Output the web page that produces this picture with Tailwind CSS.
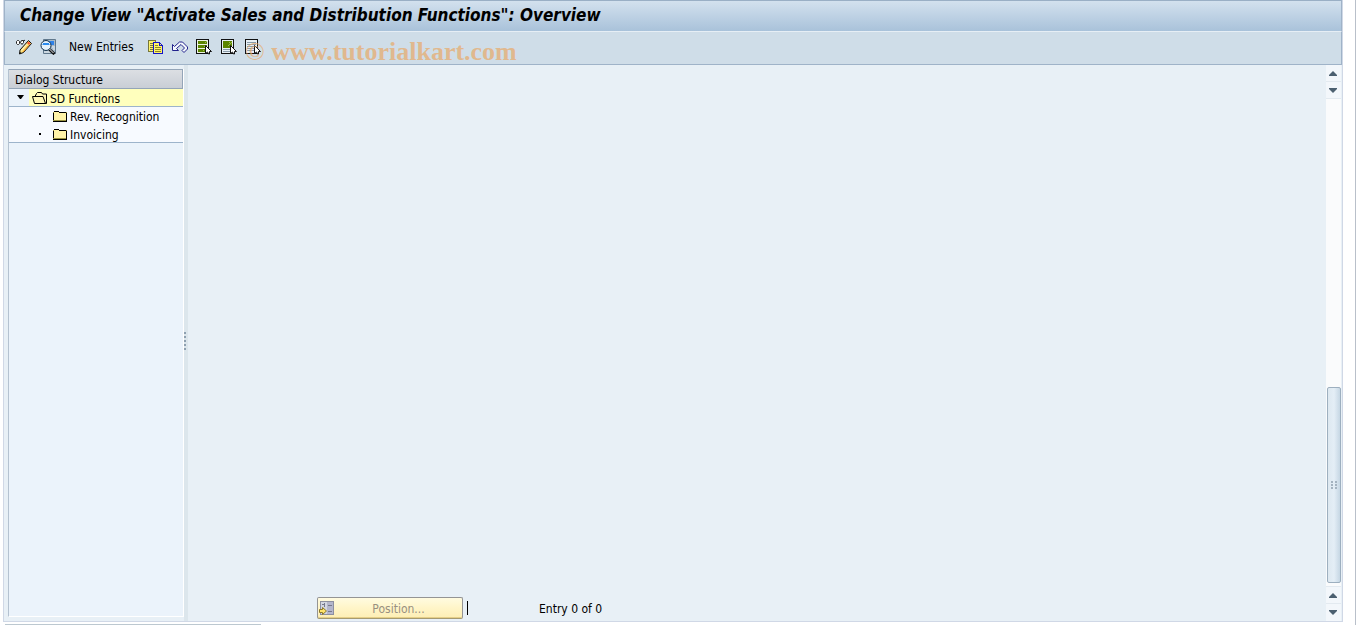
<!DOCTYPE html>
<html lang="en">
<head>
    <meta charset="UTF-8">
    <meta name="viewport" content="width=device-width, initial-scale=1.0">
    <title>Change View "Activate Sales and Distribution Functions": Overview</title>
    <script src="https://cdn.jsdelivr.net/npm/@tailwindcss/browser@4"></script>
</head>
<body class="h-screen flex flex-col overflow-hidden bg-white border-r border-[#b9c0ca] text-xs text-black font-['DejaVu_Sans_Condensed','DejaVu_Sans',sans-serif]">
    <!-- Window -->
    <div class="flex-1 min-h-0 flex flex-col ml-[3px] mr-3 border-x border-b border-[#d0d8e6] bg-[#e8f0f6]">
        <!-- Title bar -->
        <header class="h-8 shrink-0 flex items-center px-[15px] pb-0.5 border-x border-t border-t-[#9aafc5] border-x-[#9fb3c8] border-b border-b-[#e6eef5] bg-linear-to-b from-[#d3e1ee] to-[#a9c2da]">
            <h1 class="text-[17px] leading-5 font-bold italic whitespace-nowrap">Change View "Activate Sales and Distribution Functions": Overview</h1>
        </header>

        <!-- Toolbar -->
        <nav class="relative h-[33px] shrink-0 flex items-center gap-2 px-[11px] pb-0.5 border-x border-b border-[#9fb3c8] bg-[#cfdde8]">
            <button type="button" aria-label="Display / Change">
                <svg class="size-4" viewBox="0 0 16 16" fill="none">
                    <path d="M.5 4.500v-2l1-1h1l1 1v2l-1 1h-1zM4.500 3.500l1-2h2v2l-1.500 2z" fill="#fff" stroke="#222" />
                    <path d="M7 2.500l2-1.500" stroke="#222" />
                    <path d="M12.500 1.500l3 3-8 9-4 1.500.5-4z" fill="#ffe27a" stroke="#111" />
                    <path d="M12.500 2.500l2 2-1.500 1.500-2-2z" fill="#f4502a" />
                    <path d="M10.500 5.500l-5 6" stroke="#fff6d0" />
                    <path d="M12.500 6.500l-5.500 6.500" stroke="#e88b1a" />
                    <path d="M4 13l1.500 1-2 1z" fill="#111" />
                </svg>
            </button>
            <button type="button" aria-label="Choose">
                <svg class="size-4" viewBox="0 0 16 16" fill="none">
                    <path d="M3.500 .500h12v14h-12z" fill="#a8bac8" stroke="#60788c" />
                    <path d="M4 2h10v4H4z" fill="#2f82e8" />
                    <path d="M12 8h3M13 10h2M4 13h6" stroke="#eef4f8" />
                    <circle cx="6" cy="6.500" r="5" fill="#e4f2fc" stroke="#12304a" />
                    <path d="M2.500 5.500h7M3 4.500h6" stroke="#2b8cf0" />
                    <path d="M9.500 10.500l5 4.500" stroke="#111" stroke-width="3" />
                    <path d="M9.500 10l4 4" stroke="#e8eef5" />
                </svg>
            </button>
            <button type="button" class="pl-[5px] pr-1.5 leading-4 whitespace-nowrap">New Entries</button>
            <button type="button" aria-label="Copy As">
                <svg class="size-4" viewBox="0 0 16 16" fill="none" shape-rendering="crispEdges">
                    <path d="M.5 1.500h7v11h-7z" fill="#fff36b" stroke="#77773a" />
                    <path d="M2 4.500h4M2 6.500h3M2 8.500h3M2 10.500h3" stroke="#77773a" />
                    <path d="M5.500 3.500h6l3 3v8h-9z" fill="#fff36b" stroke="#1414c8" />
                    <path d="M11.500 3.500v3h3" stroke="#1414c8" />
                    <path d="M7 6.500h3M7 8.500h6M7 10.500h6M7 12.500h6" stroke="#8f8a24" />
                </svg>
            </button>
            <button type="button" aria-label="Undo">
                <svg class="size-4" viewBox="0 0 16 16" fill="none">
                    <path d="M.5 5.500v6h6l-2-2 4.500-4 3.500 3.500-2.500 2.500 2 2 3.500-3.500v-2l-5-5h-3l-5 4.500z" fill="#f4f8fc" stroke="#22228c" />
                </svg>
            </button>
            <button type="button" aria-label="Select All">
                <svg class="size-4" viewBox="0 0 16 16" fill="none" shape-rendering="crispEdges">
                    <path d="M.5 .500h12v14h-12z" fill="#edf4e4" stroke="#111" />
                    <path d="M2 2h9v3H2zM2 6h9v3H2zM2 10h7v3H2z" fill="#5c8500" />
                    <path d="M9 3h1v1H9zM10 2h1v1h-1zM8 7h1v1H8zM9 6h1v1H9zM7 11h1v1H7z" fill="#9dbb50" />
                    <path d="M9.500 6.500v8l2-1.500 1 2h1v-2.500h2z" fill="#fff" stroke="#111" shape-rendering="auto" />
                </svg>
            </button>
            <button type="button" aria-label="Select Block" class="pl-px">
                <svg class="size-4" viewBox="0 0 16 16" fill="none" shape-rendering="crispEdges">
                    <path d="M.5 .500h12v14h-12z" fill="#e8f0f6" stroke="#111" />
                    <path d="M2 2h9v7H2z" fill="#5c8500" />
                    <path d="M8 3h1v1H8zM10 3h1v1h-1zM9 4h1v1H9zM8 5h1v1H8zM7 6h1v1H7z" fill="#9dbb50" />
                    <path d="M2 10.500h7M2 12.500h7" stroke="#8a9ba8" />
                    <path d="M9.500 6.500v8l2-1.500 1 2h1v-2.500h2z" fill="#fff" stroke="#111" shape-rendering="auto" />
                </svg>
            </button>
            <button type="button" aria-label="Deselect All">
                <svg class="size-4" viewBox="0 0 16 16" fill="none" shape-rendering="crispEdges">
                    <path d="M.5 .500h12v14h-12z" fill="#e8f0f6" stroke="#111" />
                    <path d="M2 3.500h9M2 5.500h9M2 7.500h8M2 9.500h7M2 11.500h7" stroke="#8a9ba8" />
                    <path d="M9.500 6.500v8l2-1.500 1 2h1v-2.500h2z" fill="#fff" stroke="#111" shape-rendering="auto" />
                </svg>
            </button>
            <!-- Watermark -->
            <p class="absolute left-60 top-1 text-[26px] leading-8 text-[#e8a866]/70 whitespace-nowrap pointer-events-none font-['Liberation_Serif',serif]">© <span class="font-bold">www.tutorialkart.com</span></p>
        </nav>

        <div class="flex-1 min-h-0 flex">
            <!-- Dialog structure tree -->
            <aside class="w-[176px] shrink-0 flex flex-col ml-1 mt-1 mb-1 border-l border-b border-l-[#b4c2d0] border-b-white border-r border-r-white bg-[#ebf3fb]">
                <h2 class="h-5 flex items-center pl-1.5 pt-0.5 border-t border-r border-b border-[#94a5b8] bg-linear-to-b from-[#dcdfe3] to-[#c9ced6]">Dialog Structure</h2>
                <ul class="bg-[#f7faff] border-b border-[#9db4cb]">
                    <li class="h-[18px] flex items-center border-b border-[#9db4cb]">
                        <button type="button" aria-label="Collapse" class="w-5 h-full flex items-center pl-2 pb-0.5 bg-[#ebf3fb]">
                            <svg class="w-[7px] h-1" viewBox="0 0 7 4"><path d="M0 0h7L4 4H3z" fill="#000" /></svg>
                        </button>
                        <a href="#sd-functions" class="flex-1 h-full flex items-center gap-0.5 pl-[3px] bg-[#ffffbd]">
                            <svg class="w-4 h-3" viewBox="0 0 16 12" fill="none">
                                <path d="M3 4.500L4.500 1.500 5.500.5h4l1 1.500h4v9.500h-1.500" fill="#fff8b8" stroke="#000" />
                                <path d="M.5 4.500h10.500l2.500 7h-11z" fill="#fff8b8" stroke="#000" />
                            </svg>
                            <span class="pt-0.5">SD Functions</span>
                        </a>
                    </li>
                    <li class="h-[18px] flex items-center">
                        <span class="size-0.5 ml-[30px] mr-3 bg-black"></span>
                        <a href="#rev-recognition" class="flex items-center gap-[3px]">
                            <svg class="w-[14px] h-3" viewBox="0 0 14 12" fill="none" shape-rendering="crispEdges">
                                <path d="M.5 10.500v-8l1-1h4l1 1h7v8z" fill="#fff3a8" stroke="#9a9340" />
                                <path d="M.5 10V2.500M1 1.500h5M6 2.500h7M13.500 3v8M0 11.500h14" stroke="#000" />
                            </svg>
                            <span class="pt-0.5">Rev. Recognition</span>
                        </a>
                    </li>
                    <li class="h-[17px] flex items-center">
                        <span class="size-0.5 ml-[30px] mr-3 bg-black"></span>
                        <a href="#invoicing" class="flex items-center gap-[3px]">
                            <svg class="w-[14px] h-3" viewBox="0 0 14 12" fill="none" shape-rendering="crispEdges">
                                <path d="M.5 10.500v-8l1-1h4l1 1h7v8z" fill="#fff3a8" stroke="#9a9340" />
                                <path d="M.5 10V2.500M1 1.500h5M6 2.500h7M13.500 3v8M0 11.500h14" stroke="#000" />
                            </svg>
                            <span class="pt-0.5">Invoicing</span>
                        </a>
                    </li>
                </ul>
            </aside>

            <!-- Splitter -->
            <div class="w-1 shrink-0 flex flex-col items-start justify-center gap-0.5 pb-1 bg-[#dce6ec]">
                <span class="size-0.5 bg-[#8ea0b0]"></span>
                <span class="size-0.5 bg-[#8ea0b0]"></span>
                <span class="size-0.5 bg-[#8ea0b0]"></span>
                <span class="size-0.5 bg-[#8ea0b0]"></span>
                <span class="size-0.5 bg-[#8ea0b0]"></span>
            </div>

            <!-- Table area -->
            <main class="flex-1 flex items-end pl-[129px] pb-0.5">
                <button type="button" class="w-[146px] h-[22px] flex items-center pl-px rounded-xs border border-[#949494] border-b-[#a59a70] bg-linear-to-b from-[#fffbe0] via-[#fff5c8] to-[#fdeeb4] text-[#999080] shadow-[inset_0_-1px_0_#e5cf88]">
                    <svg class="size-4" viewBox="0 0 16 16" fill="none" shape-rendering="crispEdges">
                        <path d="M1.500 1.500h13v13h-13z" fill="#d2d6e2" stroke="#8d8fa0" />
                        <path d="M8 2h6v12H8z" fill="#b4b6cc" />
                        <path d="M3 4.500h3M5 2.500v4M3 8.500h2M9 5.500h4M9 11.500h4" stroke="#77798c" />
                        <path d="M.5 9.500h3v-2l4 3.500-4 3.500v-2h-3z" fill="#ffe36a" stroke="#8f7a28" shape-rendering="auto" />
                    </svg>
                    <span class="flex-1 pt-0.5 text-center">Position...</span>
                </button>
                <span class="w-px h-3.5 ml-1 mb-1 bg-black"></span>
                <p class="ml-[71px] mb-0.5 leading-4">Entry 0 of 0</p>
            </main>

            <!-- Scrollbar -->
            <div class="w-[15px] shrink-0 flex flex-col mr-px bg-[#fafbfc]">
                <button type="button" aria-label="Scroll up" class="h-[17px] flex items-center justify-center pr-0.5 bg-[#f3f7fb] border-b border-[#e3eaf0]">
                    <svg class="w-2 h-[5px]" viewBox="0 0 8 5"><path d="M4 0l4 4v1H0V4z" fill="#4c6070" /></svg>
                </button>
                <button type="button" aria-label="Scroll down" class="h-[17px] flex items-center justify-center pr-0.5 bg-[#f3f7fb] border-b border-[#e3eaf0]">
                    <svg class="w-2 h-[5px]" viewBox="0 0 8 5"><path d="M0 0h8v1L4 5 0 1z" fill="#4c6070" /></svg>
                </button>
                <div class="flex-1 flex flex-col justify-end pb-[3px] pl-px">
                    <div class="h-[196px] flex items-center justify-center border border-[#9dafbf] rounded-xs bg-linear-to-r from-[#dde8f0] via-[#e4eef6] to-[#c6d7e4]">
                        <svg class="w-1.5 h-2" viewBox="0 0 6 8"><path d="M0 0h2v2H0zM4 0h2v2H4zM0 3h2v2H0zM4 3h2v2H4zM0 6h2v2H0zM4 6h2v2H4z" fill="#a4b3c0" /></svg>
                    </div>
                </div>
                <button type="button" aria-label="Page up" class="h-[17px] flex items-center justify-center pr-0.5 bg-[#f3f7fb] border-t border-[#e3eaf0]">
                    <svg class="w-2 h-[5px]" viewBox="0 0 8 5"><path d="M4 0l4 4v1H0V4z" fill="#4c6070" /></svg>
                </button>
                <button type="button" aria-label="Page down" class="h-[18px] flex items-center justify-center pr-0.5 bg-[#f3f7fb] border-t border-[#e3eaf0]">
                    <svg class="w-2 h-[5px]" viewBox="0 0 8 5"><path d="M0 0h8v1L4 5 0 1z" fill="#4c6070" /></svg>
                </button>
            </div>
        </div>
    </div>

    <!-- Status line -->
    <footer class="h-[3px] shrink-0 w-64 ml-[5px] border-b border-[#bcc8d0]"></footer>
</body>
</html>
